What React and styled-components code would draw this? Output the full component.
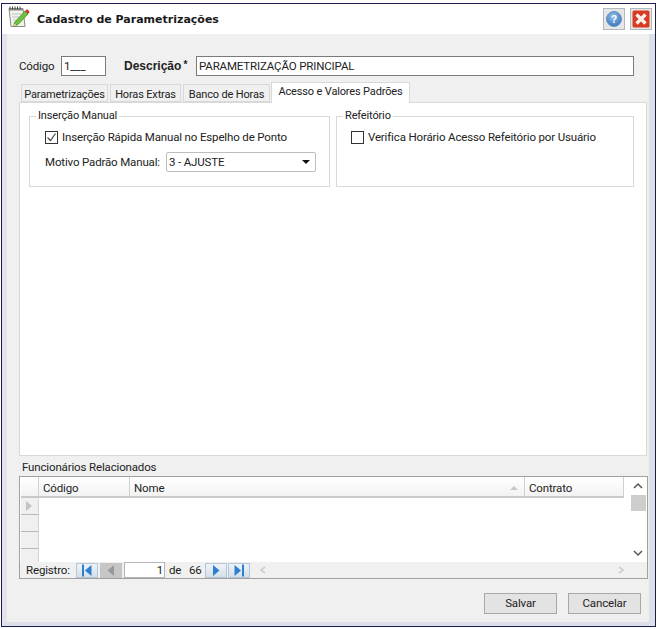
import React from 'react';
import styled, { createGlobalStyle } from 'styled-components';

const Global = createGlobalStyle`
  html, body { margin: 0; padding: 0; background: #fff; }
  body { font-family: Roboto, "Liberation Sans", Arial, sans-serif; font-size: 11.5px; letter-spacing: -0.15px; color: #222; }
  * { box-sizing: border-box; }
`;
const Page = styled.div`width: 658px; height: 629px; padding: 3px 2px 2px 1px;`;
const Win = styled.div`width: 655px; height: 624px; border: 1px solid #1d1d4d; display: flex; flex-direction: column;`;
const Header = styled.div`height: 30px; flex: none; background: #fff; display: flex; align-items: center; padding: 0 3px 0 3px; position: relative;`;
const Title = styled.div`font-family: "DejaVu Sans", Verdana, sans-serif; font-weight: 700; font-size: 11px; color: #1a1a1a; margin-left: 6px; padding-top: 1px; flex: 1; letter-spacing: 0;`;
const WinBtn = styled.div`width: 22px; height: 22px; border: 1px solid #b4b8bc; background: #e4e6e8; margin-left: ${p => p.$ml}px; display: flex; align-items: center; justify-content: center;`;
const Body = styled.div`flex: 1; background: #f0f0f0; border-left: 5px solid #e2e4ea; border-right: 6px solid #dde0e8; border-bottom: 4px solid #dde0e8; padding: 22px 2px 0 12px; display: flex; flex-direction: column;`;
const FormRow = styled.div`height: 20px; display: flex; align-items: center; flex: none;`;
const Label = styled.span`color: #222; width: ${p => p.$w ? `${p.$w}px` : 'auto'}; white-space: nowrap; flex: none;`;
const BoldLabel = styled.span`font-family: "Liberation Sans", Arial, sans-serif; font-weight: 700; font-size: 12px; letter-spacing: 0; color: #222; width: 72px; margin-left: 18px; white-space: nowrap;`;
const Star = styled.span`font-size: 10px; position: relative; top: -2px; margin-left: 2px;`;
const TextBox = styled.div`height: 20px; width: ${p => p.$w}px; border: 1px solid #7a7a7a; background: #fff; padding: 0 2px; line-height: 18px; color: #222; white-space: nowrap;`;
const Tabs = styled.div`display: flex; align-items: flex-end; height: 20px; margin-top: 6px; padding-left: 2px; flex: none; position: relative; z-index: 1;`;
const Tab = styled.div`
  height: ${p => p.$active ? 21 : 18}px;
  width: ${p => p.$w}px;
  margin-right: ${p => p.$mr || 0}px;
  margin-bottom: ${p => p.$active ? -1 : 0}px;
  text-align: center;
  font-size: 11px;
  line-height: ${p => p.$active ? 18 : 19}px;
  background: ${p => p.$active ? '#fff' : '#f0f0f0'};
  border: 1px solid #d9d9d9;
  border-bottom: ${p => p.$active ? 'none' : '1px solid #d9d9d9'};
  color: #222;
  white-space: nowrap;
`;
const Panel = styled.div`height: 354px; width: 628px; flex: none; background: #fff; border: 1px solid #d9d9d9; padding: 6px 12px 0 9px; display: flex; gap: 6px; align-items: flex-start;`;
const Group = styled.fieldset`width: ${p => p.$w}px; height: 78px; margin: 0; border: 1px solid #d9d9d9; padding: 0 0 0 ${p => p.$pl}px; min-width: 0;`;
const Legend = styled.legend`font-size: 11px; line-height: 14px; padding: 0 2px; margin-left: ${p => p.$ml}px; color: #222;`;
const CheckRow = styled.div`display: flex; align-items: center; height: 14px; margin-top: 7px; gap: 4px;`;
const Check = styled.div`width: 13px; height: 13px; border: 1px solid #333; background: #fff; display: flex; align-items: center; justify-content: center; flex: none;`;
const SelectRow = styled.div`display: flex; align-items: center; margin-top: 7px; height: 21px;`;
const Select = styled.div`width: 150px; height: 20px; border: 1px solid #bdbdbd; border-radius: 2px; background: #fff; display: flex; align-items: center; justify-content: space-between; padding: 0 3px 0 2px;`;
const Caret = styled.div`width: 0; height: 0; border-left: 4px solid transparent; border-right: 4px solid transparent; border-top: 4px solid #111; margin-right: 2px;`;
const SectionLabel = styled.div`height: 20px; line-height: 22px; padding-left: 3px; flex: none;`;
const Grid = styled.div`width: 629px; height: 103px; border: 1px solid #a0a0a0; background: #fff; flex: none; display: flex; flex-direction: column;`;
const GridTop = styled.div`display: flex; height: 85px; flex: none;`;
const GridMain = styled.div`width: 604px; padding-left: 1px; flex: none;`;
const HeaderRow = styled.div`display: grid; grid-template-columns: 18px 91px 395px 99px; height: 21px; background: linear-gradient(#fff, #f4f4f4);`;
const HeadCell = styled.div`border-right: 1px solid #cfcfcf; border-bottom: 2px solid #c9c9c9; padding: 2px 0 0 4px; line-height: 16px; display: flex; align-items: center; justify-content: space-between; background: linear-gradient(#fff, #f2f2f2);`;
const Rows = styled.div`width: 18px;`;
const RowHead = styled.div`height: ${p => p.$h}px; background: #f0f0f0; border-bottom: ${p => p.$last ? 'none' : '1px solid #b9b9b9'}; border-right: 1px solid #d5d5d5; display: flex; align-items: center; padding-left: 5px;`;
const RowTri = styled.div`width: 0; height: 0; border-top: 5px solid transparent; border-bottom: 5px solid transparent; border-left: 6px solid #c4c4c4;`;
const SortTri = styled.div`width: 0; height: 0; border-left: 4px solid transparent; border-right: 4px solid transparent; border-bottom: 4px solid #c4c8cc; margin-right: 6px;`;
const Scrollbar = styled.div`width: 16px; margin-left: 6px; display: flex; flex-direction: column; align-items: center; background: #fff;`;
const ScrollBtn = styled.div`height: 18px; display: flex; align-items: center; justify-content: center; flex: none;`;
const Thumb = styled.div`width: 15px; height: 16px; background: #cdcdcd; flex: none;`;
const Spacer = styled.div`flex: 1;`;
const Nav = styled.div`flex: 1; background: #f0f0f0; display: flex; align-items: center; padding-left: 6px;`;
const NavBtn = styled.div`width: 22px; height: 15px; flex: none; margin-left: ${p => p.$ml || 0}px; border: 1px solid ${p => p.$off ? '#c4c4c4' : '#b5c6d6'}; background: ${p => p.$off ? '#c6c6c6' : 'linear-gradient(#eef3f8,#d5dfe9)'}; display: flex; align-items: center; justify-content: center;`;
const NavInput = styled.div`width: 41px; height: 16px; margin-left: 2px; background: #fff; border: 1px solid #b5b5b5; text-align: right; padding-right: 1px; line-height: 14px; flex: none;`;
const NavText = styled.span`margin-left: ${p => p.$ml || 0}px; margin-right: ${p => p.$mr || 0}px; width: ${p => p.$w ? `${p.$w}px` : 'auto'}; flex: none; white-space: nowrap;`;
const Footer = styled.div`display: flex; justify-content: flex-end; gap: 11px; margin-top: 14px; padding-right: 6px; flex: none;`;
const Button = styled.div`width: 73px; height: 21px; border: 1px solid #a8a8a8; background: #e3e3e3; text-align: center; line-height: 19px; color: #222;`;
const NoteSvg = styled.svg`margin-top: -3px; flex: none;`;

const NoteIcon = () => (
  <NoteSvg width="26" height="26" viewBox="0 0 24 26">
    <path d="M3 3.5h14l2 18H5z" fill="#f4f3ea" stroke="#8a8a80" strokeWidth="1" />
    <path d="M3 3h14v2.5H3z" fill="#8d8d8d" />
    <path d="M4 1.5v3M6.5 1.5v3M9 1.5v3M11.5 1.5v3M14 1.5v3" stroke="#444" strokeWidth="1" />
    <path d="M6 9h9M6 12h7M7 15h5M7 18h6" stroke="#b8c2cc" strokeWidth="1" />
    <path d="M9 17l-1.5 4.5 4.5-2L22 9l-3-3z" fill="#6fc23f" stroke="#3f8a2a" strokeWidth=".8" />
    <path d="M19 6l3 3 1.3-1.6c.4-.9-1.5-3-2.6-2.9z" fill="#d9342b" />
    <path d="M8.6 18.6l-1.1 2.9 2.9-1.2z" fill="#f1d9a8" />
  </NoteSvg>
);
const HelpIcon = () => (
  <svg width="18" height="18" viewBox="0 0 18 18">
    <defs><radialGradient id="hg" cx=".45" cy=".35" r=".7"><stop offset="0" stopColor="#9cc6ee" /><stop offset="1" stopColor="#2f6fb8" /></radialGradient></defs>
    <circle cx="9" cy="9" r="7.5" fill="url(#hg)" stroke="#6d93bd" strokeWidth="1" />
    <text x="9" y="12.5" textAnchor="middle" fontSize="10" fontWeight="700" fontFamily="Liberation Sans" fill="#fff">?</text>
  </svg>
);
const CloseIcon = () => (
  <svg width="18" height="18" viewBox="0 0 18 18">
    <rect x="0.5" y="0.5" width="17" height="17" rx="1.5" fill="#d83a22" />
    <path d="M4.5 4.5l9 9M13.5 4.5l-9 9" stroke="#fdf0ea" strokeWidth="3.4" />
  </svg>
);
const Tri = ({ dir = 'r', bar, color = '#2f7fd0' }) => (
  <svg width="14" height="13" viewBox="0 0 14 13">
    {dir === 'r' ? <path d={bar ? 'M2.5 1l6.5 5.5-6.5 5.5z' : 'M4 1l6.5 5.5L4 12z'} fill={color} /> : <path d={bar ? 'M11.5 1L5 6.5l6.5 5.5z' : 'M10 1L3.5 6.5 10 12z'} fill={color} />}
    {bar && <rect x={dir === 'r' ? 10 : 2} y="0.5" width="2" height="12" fill={color} />}
  </svg>
);
const Chev = ({ d, c = '#555' }) => (
  <svg width="10" height="8" viewBox="0 0 10 8"><path d={d} fill="none" stroke={c} strokeWidth="1.5" /></svg>
);

export default function App() {
  return (
    <Page>
      <Global />
      <Win>
        <Header>
          <NoteIcon />
          <Title>Cadastro de Parametrizações</Title>
          <WinBtn><HelpIcon /></WinBtn>
          <WinBtn $ml={5}><CloseIcon /></WinBtn>
        </Header>
        <Body>
          <FormRow>
            <Label $w={42}>Código</Label>
            <TextBox $w={45}>1___</TextBox>
            <BoldLabel>Descrição<Star>*</Star></BoldLabel>
            <TextBox $w={438}>PARAMETRIZAÇÃO PRINCIPAL</TextBox>
          </FormRow>
          <Tabs>
            <Tab $w={87} $mr={2}>Parametrizações</Tab>
            <Tab $w={71} $mr={2}>Horas Extras</Tab>
            <Tab $w={87} $mr={1}>Banco de Horas</Tab>
            <Tab $active $w={139}>Acesso e Valores Padrões</Tab>
          </Tabs>
          <Panel>
            <Group $w={301} $pl={15}>
              <Legend $ml={-9}>Inserção Manual</Legend>
              <CheckRow>
                <Check><svg width="11" height="11" viewBox="0 0 11 11"><path d="M1.5 5.5l3 3 5-7" fill="none" stroke="#444" strokeWidth="1.2" /></svg></Check>
                <Label>Inserção Rápida Manual no Espelho de Ponto</Label>
              </CheckRow>
              <SelectRow>
                <Label $w={121}>Motivo Padrão Manual:</Label>
                <Select>3 - AJUSTE<Caret /></Select>
              </SelectRow>
            </Group>
            <Group $w={298} $pl={14}>
              <Legend $ml={-8}>Refeitório</Legend>
              <CheckRow>
                <Check />
                <Label>Verifica Horário Acesso Refeitório por Usuário</Label>
              </CheckRow>
            </Group>
          </Panel>
          <SectionLabel>Funcionários Relacionados</SectionLabel>
          <Grid>
            <GridTop>
              <GridMain>
                <HeaderRow>
                  <HeadCell />
                  <HeadCell>Código</HeadCell>
                  <HeadCell>Nome<SortTri /></HeadCell>
                  <HeadCell>Contrato</HeadCell>
                </HeaderRow>
                <Rows>
                  <RowHead $h={17}><RowTri /></RowHead>
                  <RowHead $h={17} />
                  <RowHead $h={17} />
                  <RowHead $h={13} $last />
                </Rows>
              </GridMain>
              <Scrollbar>
                <ScrollBtn><Chev d="M1 6l4-4 4 4" /></ScrollBtn>
                <Thumb />
                <Spacer />
                <ScrollBtn><Chev d="M1 2l4 4 4-4" /></ScrollBtn>
              </Scrollbar>
            </GridTop>
            <Nav>
              <NavText $w={42}>Registro:</NavText>
              <NavBtn $ml={8}><Tri dir="l" bar /></NavBtn>
              <NavBtn $ml={2} $off><Tri dir="l" color="#999" /></NavBtn>
              <NavInput>1</NavInput>
              <NavText $ml={4} $w={11}>de</NavText>
              <NavText $ml={9} $w={12}>66</NavText>
              <NavBtn $ml={4}><Tri /></NavBtn>
              <NavBtn $ml={1}><Tri bar /></NavBtn>
              <NavText $ml={8}><Chev d="M7 1L3 4l4 3" c="#c8c8c8" /></NavText>
              <Spacer />
              <NavText $mr={21}><Chev d="M3 1l4 3-4 3" c="#c8c8c8" /></NavText>
            </Nav>
          </Grid>
          <Footer>
            <Button>Salvar</Button>
            <Button>Cancelar</Button>
          </Footer>
        </Body>
      </Win>
    </Page>
  );
}
